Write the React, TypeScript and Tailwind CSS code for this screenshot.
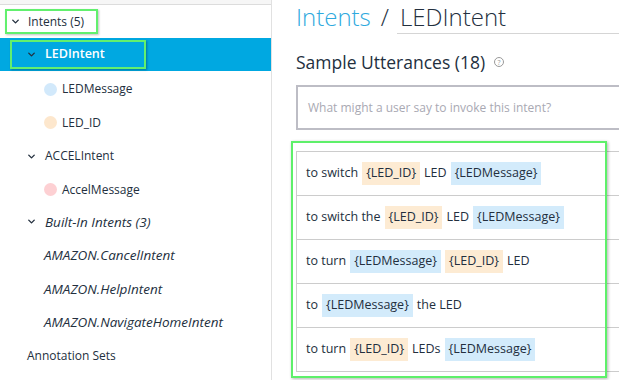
import { ChevronDown } from 'lucide-react';

const font = { fontFamily: '"Open Sans", "Noto Sans", sans-serif' };

type Token = { text: string; kind?: 'id' | 'msg' };

const utterances: Token[][] = [
    [{ text: 'to switch' }, { text: '{LED_ID}', kind: 'id' }, { text: 'LED' }, { text: '{LEDMessage}', kind: 'msg' }],
    [{ text: 'to switch the' }, { text: '{LED_ID}', kind: 'id' }, { text: 'LED' }, { text: '{LEDMessage}', kind: 'msg' }],
    [{ text: 'to turn' }, { text: '{LEDMessage}', kind: 'msg' }, { text: '{LED_ID}', kind: 'id' }, { text: 'LED' }],
    [{ text: 'to' }, { text: '{LEDMessage}', kind: 'msg' }, { text: 'the LED' }],
    [{ text: 'to turn' }, { text: '{LED_ID}', kind: 'id' }, { text: 'LEDs' }, { text: '{LEDMessage}', kind: 'msg' }],
];

const SlotRow = ({ label, dot }: { label: string; dot: string }) => (
    <div className="flex h-[33.5px] items-center pt-[3px] pl-[44px]">
        <span className={`mr-[5px] h-[13px] w-[13px] rounded-full ${dot}`} />
        <span className="text-[12px] text-[#232f3e]">{label}</span>
    </div>
);

const Sidebar = () => (
    <div className="w-[272px] shrink-0 border-r border-[#e1e1e1] bg-white">
        <div className="h-[5px] border-b border-[#dcdcdc] bg-[#f6f6f6]" />
        <div className="flex h-[33px] items-center">
            <div className="ml-[5px] flex h-[25px] w-[93px] items-center border-2 border-[#62f06e] pl-[3px] shadow-[1px_1px_2px_rgba(0,0,0,0.25)]">
                <ChevronDown className="h-[11px] w-[11px] text-[#232f3e]" strokeWidth={3} />
                <span className="ml-[7px] text-[12px] text-[#232f3e]">Intents (5)</span>
            </div>
        </div>
        <div className="flex h-[33px] items-center bg-[#00a8e1]">
            <div className="ml-[10px] flex h-[29px] w-[136px] items-center border-2 border-[#62f06e] pl-[14px] shadow-[1px_1px_2px_rgba(0,0,0,0.3)]">
                <ChevronDown className="h-[11px] w-[11px] text-[#232f3e]" strokeWidth={3} />
                <span className="ml-[8px] text-[12.5px] font-semibold text-white">LEDIntent</span>
            </div>
        </div>
        <SlotRow label="LEDMessage" dot="bg-[#d2e9fb]" />
        <SlotRow label="LED_ID" dot="bg-[#fde7cd]" />
        <div className="flex h-[33.5px] items-center pt-[3px] pl-[26px]">
            <ChevronDown className="h-[11px] w-[11px] text-[#232f3e]" strokeWidth={3} />
            <span className="ml-[8px] text-[12px] text-[#232f3e]">ACCELIntent</span>
        </div>
        <SlotRow label="AccelMessage" dot="bg-[#fdd0d3]" />
        <div className="flex h-[33.5px] items-center pl-[26px]">
            <ChevronDown className="h-[11px] w-[11px] text-[#232f3e]" strokeWidth={3} />
            <span className="ml-[8px] text-[13.5px] italic text-[#232f3e]">Built-In Intents (3)</span>
        </div>
        {['AMAZON.CancelIntent', 'AMAZON.HelpIntent', 'AMAZON.NavigateHomeIntent'].map((name) => (
            <div key={name} className="flex h-[33.5px] items-center pl-[44px]">
                <span className="text-[13.5px] italic text-[#232f3e]">{name}</span>
            </div>
        ))}
        <div className="flex h-[33.5px] items-center pl-[27px]">
            <span className="text-[12px] text-[#232f3e]">Annotation Sets</span>
        </div>
    </div>
);

export default function App() {
    return (
        <div className="flex h-[380px] w-[619px] overflow-hidden bg-white" style={font}>
            <Sidebar />
            <div className="relative min-w-0 flex-1 pl-[24px]">
                <div className="flex h-[34px] items-end">
                    <span className="text-[24px] font-light leading-[34px] text-[#2ea9de]">Intents</span>
                    <span className="ml-[10px] text-[24px] font-light leading-[34px] text-[#232f3e]">/</span>
                    <div className="ml-[8px] flex-1 border-b border-[#d5d5d5] pl-[3px] text-[24px] font-light leading-[33px] text-[#232f3e]">
                        LEDIntent
                    </div>
                </div>
                <div className="mt-[15px] flex items-center">
                    <span className="text-[17.5px] text-[#232f3e]">Sample Utterances (18)</span>
                    <span className="ml-[9px] flex h-[10px] w-[10px] items-center justify-center rounded-full border border-[#9a9a9a] text-[7px] leading-none text-[#9a9a9a]">
                        ?
                    </span>
                </div>
                <div className="mt-[10px] flex h-[45px] w-[340px] items-center border-2 border-[#bdbdc5] pl-[10px]">
                    <span className="text-[12px] text-[#a9a9b3]">What might a user say to invoke this intent?</span>
                </div>
                <div className="mt-[21px] w-[340px] border-l border-t border-[#cccccc]">
                    {utterances.map((row, i) => (
                        <div key={i} className="flex h-[44px] items-center gap-[4px] border-b border-[#cccccc] pl-[9px]">
                            {row.map((t, j) =>
                                t.kind ? (
                                    <span
                                        key={j}
                                        className={`flex h-[23px] items-center px-[4px] text-[12.5px] text-[#232f3e] ${
                                            t.kind === 'id' ? 'bg-[#fdebd3]' : 'bg-[#d3ebfb]'
                                        }`}
                                    >
                                        {t.text}
                                    </span>
                                ) : (
                                    <span key={j} className="text-[12.5px] text-[#232f3e]">
                                        {t.text}
                                    </span>
                                ),
                            )}
                        </div>
                    ))}
                </div>
                <div className="pointer-events-none absolute left-[19px] top-[141px] h-[237px] w-[316px] border-2 border-[#5ef06a] shadow-[1px_1px_3px_rgba(0,0,0,0.3)]" />
            </div>
        </div>
    );
}
